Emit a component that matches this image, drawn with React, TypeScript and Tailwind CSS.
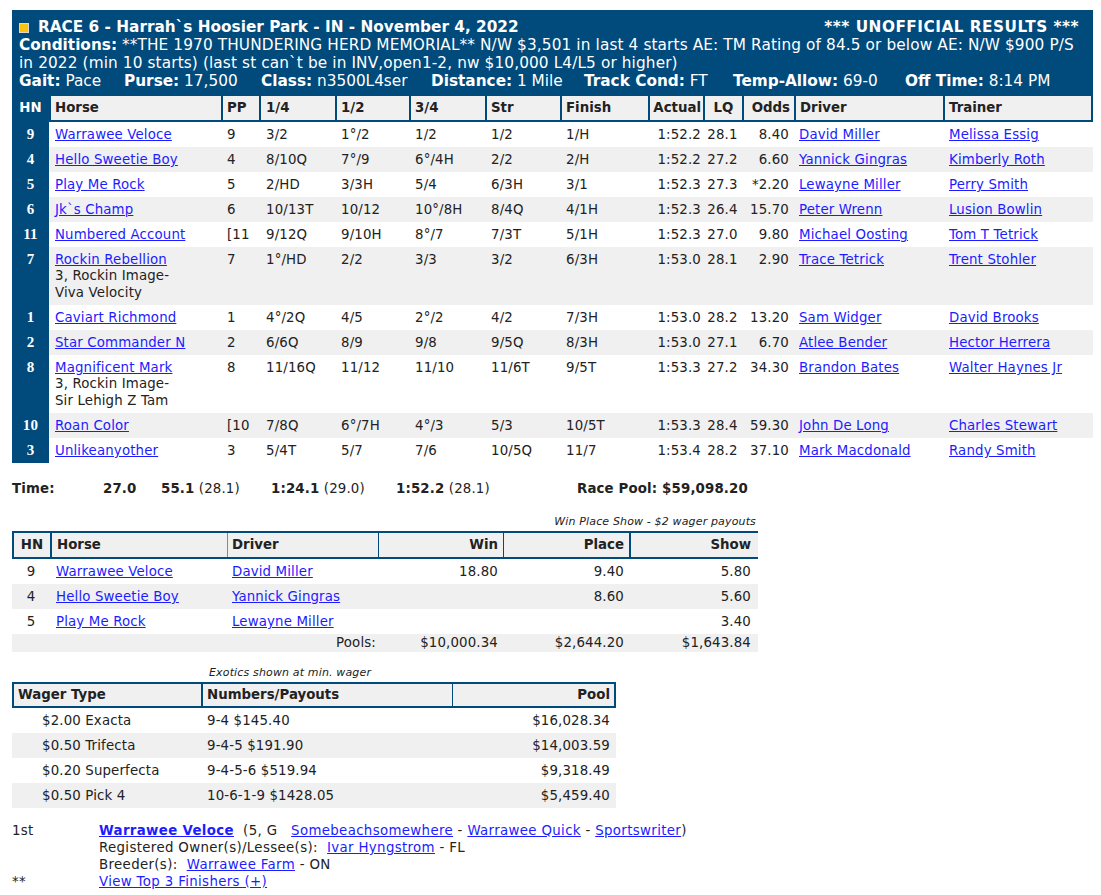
import React from 'react';

type Row = {
  hn: string;
  horse: string;
  extra?: string[];
  pp: string;
  q1: string;
  q2: string;
  q3: string;
  str: string;
  fin: string;
  actual: string;
  lq: string;
  odds: string;
  driver: string;
  trainer: string;
};

const rows: Row[] = [
  { hn: '9', horse: 'Warrawee Veloce', pp: '9', q1: '3/2', q2: '1°/2', q3: '1/2', str: '1/2', fin: '1/H', actual: '1:52.2', lq: '28.1', odds: '8.40', driver: 'David Miller', trainer: 'Melissa Essig' },
  { hn: '4', horse: 'Hello Sweetie Boy', pp: '4', q1: '8/10Q', q2: '7°/9', q3: '6°/4H', str: '2/2', fin: '2/H', actual: '1:52.2', lq: '27.2', odds: '6.60', driver: 'Yannick Gingras', trainer: 'Kimberly Roth' },
  { hn: '5', horse: 'Play Me Rock', pp: '5', q1: '2/HD', q2: '3/3H', q3: '5/4', str: '6/3H', fin: '3/1', actual: '1:52.3', lq: '27.3', odds: '*2.20', driver: 'Lewayne Miller', trainer: 'Perry Smith' },
  { hn: '6', horse: 'Jk`s Champ', pp: '6', q1: '10/13T', q2: '10/12', q3: '10°/8H', str: '8/4Q', fin: '4/1H', actual: '1:52.3', lq: '26.4', odds: '15.70', driver: 'Peter Wrenn', trainer: 'Lusion Bowlin' },
  { hn: '11', horse: 'Numbered Account', pp: '[11', q1: '9/12Q', q2: '9/10H', q3: '8°/7', str: '7/3T', fin: '5/1H', actual: '1:52.3', lq: '27.0', odds: '9.80', driver: 'Michael Oosting', trainer: 'Tom T Tetrick' },
  { hn: '7', horse: 'Rockin Rebellion', extra: ['3, Rockin Image-', 'Viva Velocity'], pp: '7', q1: '1°/HD', q2: '2/2', q3: '3/3', str: '3/2', fin: '6/3H', actual: '1:53.0', lq: '28.1', odds: '2.90', driver: 'Trace Tetrick', trainer: 'Trent Stohler' },
  { hn: '1', horse: 'Caviart Richmond', pp: '1', q1: '4°/2Q', q2: '4/5', q3: '2°/2', str: '4/2', fin: '7/3H', actual: '1:53.0', lq: '28.2', odds: '13.20', driver: 'Sam Widger', trainer: 'David Brooks' },
  { hn: '2', horse: 'Star Commander N', pp: '2', q1: '6/6Q', q2: '8/9', q3: '9/8', str: '9/5Q', fin: '8/3H', actual: '1:53.0', lq: '27.1', odds: '6.70', driver: 'Atlee Bender', trainer: 'Hector Herrera' },
  { hn: '8', horse: 'Magnificent Mark', extra: ['3, Rockin Image-', 'Sir Lehigh Z Tam'], pp: '8', q1: '11/16Q', q2: '11/12', q3: '11/10', str: '11/6T', fin: '9/5T', actual: '1:53.3', lq: '27.2', odds: '34.30', driver: 'Brandon Bates', trainer: 'Walter Haynes Jr' },
  { hn: '10', horse: 'Roan Color', pp: '[10', q1: '7/8Q', q2: '6°/7H', q3: '4°/3', str: '5/3', fin: '10/5T', actual: '1:53.3', lq: '28.4', odds: '59.30', driver: 'John De Long', trainer: 'Charles Stewart' },
  { hn: '3', horse: 'Unlikeanyother', pp: '3', q1: '5/4T', q2: '5/7', q3: '7/6', str: '10/5Q', fin: '11/7', actual: '1:53.4', lq: '28.2', odds: '37.10', driver: 'Mark Macdonald', trainer: 'Randy Smith' },
];

const wps = [
  { hn: '9', horse: 'Warrawee Veloce', driver: 'David Miller', win: '18.80', place: '9.40', show: '5.80' },
  { hn: '4', horse: 'Hello Sweetie Boy', driver: 'Yannick Gingras', win: '', place: '8.60', show: '5.60' },
  { hn: '5', horse: 'Play Me Rock', driver: 'Lewayne Miller', win: '', place: '', show: '3.40' },
];

const exotics = [
  { type: '$2.00 Exacta', nums: '9-4 $145.40', pool: '$16,028.34' },
  { type: '$0.50 Trifecta', nums: '9-4-5 $191.90', pool: '$14,003.59' },
  { type: '$0.20 Superfecta', nums: '9-4-5-6 $519.94', pool: '$9,318.49' },
  { type: '$0.50 Pick 4', nums: '10-6-1-9 $1428.05', pool: '$5,459.40' },
];

const Link = ({ children, bold }: { children: React.ReactNode; bold?: boolean }) => (
  <a href="#" className={`text-[#1c1cff] underline ${bold ? 'font-bold' : ''}`}>
    {children}
  </a>
);

const mainCols = 'grid grid-cols-[37px_172px_38px_76px_74px_76px_75px_88px_55px_39px_52px_149px_150px]';
const wpsCols = 'grid grid-cols-[38px_177px_151px_125px_126px_127px]';
const exoCols = 'grid grid-cols-[189px_251px_164px]';

const App: React.FC = () => {
  return (
    <div
      className="min-h-screen bg-white text-[#222] text-[13.33px] tracking-[0.15px] pt-[10px] pl-[12px]"
      style={{ fontFamily: '"DejaVu Sans", Verdana, sans-serif' }}
    >
      {/* Race header + results table */}
      <div className="w-[1081px]">
        <div className="bg-[#004a7c] text-white text-[15.3px] tracking-normal leading-[18px] pl-[7px] pr-[14px] pt-[8px] pb-[6px]">
          <div className="flex justify-between items-center">
            <div className="flex items-center font-bold">
              <span className="w-[10px] h-[10px] bg-[#ffc20e] border border-[#d9d9d9] mr-[9px] mt-[1px]"></span>
              <span>RACE 6 - Harrah`s Hoosier Park - IN - November 4, 2022</span>
            </div>
            <span className="font-bold tracking-[0.5px]">*** UNOFFICIAL RESULTS ***</span>
          </div>
          <div className="whitespace-nowrap tracking-[0.12px]">
            <span className="font-bold tracking-normal">Conditions:</span> **THE 1970 THUNDERING HERD MEMORIAL** N/W $3,501 in last 4 starts AE: TM Rating of 84.5 or below AE: N/W $900 P/S
          </div>
          <div className="whitespace-nowrap tracking-[0.12px]">
            in 2022 (min 10 starts) (last st can`t be in INV,open1-2, nw $10,000 L4/L5 or higher)
          </div>
          <div className="flex whitespace-nowrap">
            <span className="w-[105px]"><b>Gait:</b> Pace</span>
            <span className="w-[137px]"><b>Purse:</b> 17,500</span>
            <span className="w-[170px]"><b>Class:</b> n3500L4ser</span>
            <span className="w-[153px]"><b>Distance:</b> 1 Mile</span>
            <span className="w-[149px]"><b>Track Cond:</b> FT</span>
            <span className="w-[172px]"><b>Temp-Allow:</b> 69-0</span>
            <span><b>Off Time:</b> 8:14 PM</span>
          </div>
        </div>

        {/* column headings */}
        <div className={`${mainCols} bg-[#004a7c] font-bold tracking-normal leading-[24px] border-b-2 border-[#004a7c] whitespace-nowrap`}>
          <div className="text-white text-center">HN</div>
          <div className="bg-[#f0f0f0] border-l-2 border-[#004a7c] pl-[4px]">Horse</div>
          <div className="bg-[#f0f0f0] border-l-2 border-[#004a7c] pl-[4px]">PP</div>
          <div className="bg-[#f0f0f0] border-l-2 border-[#004a7c] pl-[5px]">1/4</div>
          <div className="bg-[#f0f0f0] border-l-2 border-[#004a7c] pl-[4px]">1/2</div>
          <div className="bg-[#f0f0f0] border-l-2 border-[#004a7c] pl-[4px]">3/4</div>
          <div className="bg-[#f0f0f0] border-l-2 border-[#004a7c] pl-[4px]">Str</div>
          <div className="bg-[#f0f0f0] border-l-2 border-[#004a7c] pl-[4px]">Finish</div>
          <div className="bg-[#f0f0f0] border-l-2 border-[#004a7c] text-right pr-[2px]">Actual</div>
          <div className="bg-[#f0f0f0] border-l-2 border-[#004a7c] text-center">LQ</div>
          <div className="bg-[#f0f0f0] border-l-2 border-[#004a7c] text-right pr-[4px]">Odds</div>
          <div className="bg-[#f0f0f0] border-l-2 border-[#004a7c] pl-[4px]">Driver</div>
          <div className="bg-[#f0f0f0] border-l-2 border-r-2 border-[#004a7c] pl-[4px]">Trainer</div>
        </div>

        {rows.map((r, i) => (
          <div key={r.hn} className={`${mainCols} leading-[17px] whitespace-nowrap ${i % 2 ? 'bg-[#f0f0f0]' : 'bg-white'}`}>
            <div
              className="bg-[#004a7c] text-white font-bold text-center text-[15px] py-[4px]"
              style={{ fontFamily: '"Liberation Serif", "Times New Roman", serif' }}
            >
              {r.hn}
            </div>
            <div className="pl-[6px] py-[4px]">
              <Link>{r.horse}</Link>
              {r.extra?.map((t) => (
                <div key={t} className="leading-[16.5px]">{t}</div>
              ))}
            </div>
            <div className="pl-[6px] py-[4px]">{r.pp}</div>
            <div className="pl-[7px] py-[4px]">{r.q1}</div>
            <div className="pl-[6px] py-[4px]">{r.q2}</div>
            <div className="pl-[6px] py-[4px]">{r.q3}</div>
            <div className="pl-[6px] py-[4px]">{r.str}</div>
            <div className="pl-[6px] py-[4px]">{r.fin}</div>
            <div className="text-right pr-[2px] py-[4px]">{r.actual}</div>
            <div className="text-center py-[4px]">{r.lq}</div>
            <div className="text-right pr-[5px] py-[4px]">{r.odds}</div>
            <div className="pl-[5px] py-[4px]"><Link>{r.driver}</Link></div>
            <div className="pl-[6px] py-[4px]"><Link>{r.trainer}</Link></div>
          </div>
        ))}
      </div>

      {/* fractions */}
      <div className="flex leading-[17px] mt-[17px] whitespace-nowrap">
        <span className="w-[91px] font-bold">Time:</span>
        <span className="w-[58px] font-bold">27.0</span>
        <span className="w-[110px]"><b>55.1</b> (28.1)</span>
        <span className="w-[125px]"><b>1:24.1</b> (29.0)</span>
        <span className="w-[181px]"><b>1:52.2</b> (28.1)</span>
        <span className="font-bold">Race Pool: $59,098.20</span>
      </div>

      {/* Win Place Show */}
      <div className="w-[746px] mt-[18px]">
        <div className="text-right italic text-[11px] leading-[14px] pr-[2px]">Win Place Show - $2 wager payouts</div>
        <div className={`${wpsCols} mt-[2px] bg-[#f0f0f0] border-y-2 border-[#004a7c] font-bold tracking-normal leading-[24px]`}>
          <div className="border-l-2 border-[#004a7c] text-center">HN</div>
          <div className="border-l-2 border-[#004a7c] pl-[5px]">Horse</div>
          <div className="border-l border-[#6a8fb0] pl-[4px]">Driver</div>
          <div className="border-l border-[#004a7c] text-right pr-[5px]">Win</div>
          <div className="border-l border-[#004a7c] text-right pr-[5px]">Place</div>
          <div className="border-l-2 border-[#004a7c] text-right pr-[5px]">Show</div>
        </div>
        {wps.map((r, i) => (
          <div key={r.hn} className={`${wpsCols} leading-[25px] ${i % 2 ? 'bg-[#f0f0f0]' : 'bg-white'}`}>
            <div className="text-center">{r.hn}</div>
            <div className="pl-[6px]"><Link>{r.horse}</Link></div>
            <div className="pl-[5px]"><Link>{r.driver}</Link></div>
            <div className="text-right pr-[5px]">{r.win}</div>
            <div className="text-right pr-[5px]">{r.place}</div>
            <div className="text-right pr-[5px]">{r.show}</div>
          </div>
        ))}
        <div className={`${wpsCols} leading-[18px] bg-[#f0f0f0]`}>
          <div></div>
          <div></div>
          <div className="text-right pr-[2px]">Pools:</div>
          <div className="text-right pr-[5px]">$10,000.34</div>
          <div className="text-right pr-[5px]">$2,644.20</div>
          <div className="text-right pr-[5px]">$1,643.84</div>
        </div>
      </div>

      {/* Exotics */}
      <div className="w-[604px] mt-[14px]">
        <div className="italic text-[11px] leading-[14px] pl-[197px]">Exotics shown at min. wager</div>
        <div className={`${exoCols} mt-[2px] bg-[#f0f0f0] border-y-2 border-[#004a7c] font-bold tracking-normal leading-[22px]`}>
          <div className="border-l-2 border-[#004a7c] pl-[4px]">Wager Type</div>
          <div className="border-l-2 border-[#004a7c] pl-[4px]">Numbers/Payouts</div>
          <div className="border-l border-r-2 border-[#004a7c] text-right pr-[4px]">Pool</div>
        </div>
        {exotics.map((e, i) => (
          <div key={e.type} className={`${exoCols} leading-[25px] ${i % 2 ? 'bg-[#f0f0f0]' : 'bg-white'}`}>
            <div className="pl-[30px]">{e.type}</div>
            <div className="pl-[6px]">{e.nums}</div>
            <div className="text-right pr-[6px]">{e.pool}</div>
          </div>
        ))}
      </div>

      {/* Winner details */}
      <div className="grid grid-cols-[87px_1fr] leading-[17px] tracking-[0.35px] mt-[14px] whitespace-nowrap">
        <div>1st</div>
        <div>
          <Link bold>Warrawee Veloce</Link>&nbsp; (5, G&nbsp;&nbsp; <Link>Somebeachsomewhere</Link> - <Link>Warrawee Quick</Link> - <Link>Sportswriter</Link>)
        </div>
        <div></div>
        <div>
          Registered Owner(s)/Lessee(s):&nbsp; <Link>Ivar Hyngstrom</Link> - FL
        </div>
        <div></div>
        <div>
          Breeder(s):&nbsp; <Link>Warrawee Farm</Link> - ON
        </div>
        <div>**</div>
        <div>
          <Link>View Top 3 Finishers (+)</Link>
        </div>
      </div>
    </div>
  );
};

export default App;
